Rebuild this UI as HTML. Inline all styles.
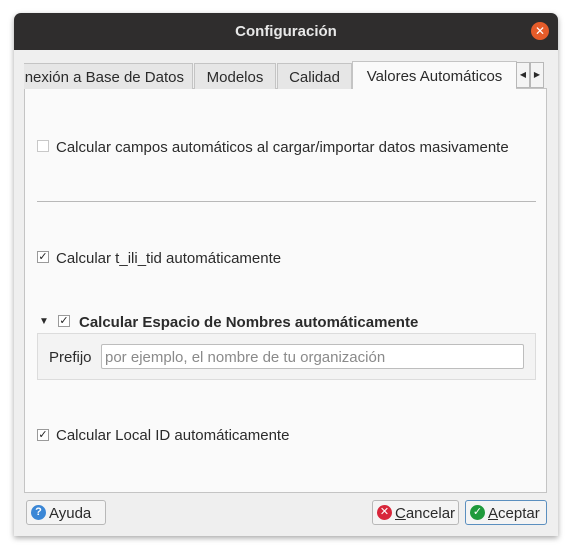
<!DOCTYPE html>
<html><head><style>
*{margin:0;padding:0;box-sizing:border-box}
body{width:577px;height:555px;background:#fff;font-family:"Liberation Sans","DejaVu Sans",sans-serif;font-size:15px;color:#2b2b2b;position:relative;overflow:hidden}
.a{position:absolute}
.win{left:14px;top:13px;width:544px;height:523px;background:#efefef;border-radius:7px 7px 0 0;box-shadow:0 2px 6px rgba(0,0,0,.35);overflow:hidden}
.close{left:531px;top:22px;width:18px;height:18px;border-radius:50%;background:#e55c2a;color:#fff;font-size:12px;line-height:18px;text-align:center}
.tab{top:63px;height:26px;background:#e6e6e6;border:1px solid #c4c4c4;border-bottom:none;line-height:27px;text-align:center;color:#2b2b2b;white-space:nowrap;overflow:hidden}
.panel{left:24px;top:88px;width:523px;height:405px;background:#fafafa;border:1px solid #c4c4c4}
.cb{width:12px;height:12px;border:1px solid #9a9a9a;background:#fff;font-size:11px;line-height:10px;text-align:center;color:#222}
.btn{top:500px;height:25px;border:1px solid #b8b8b8;border-radius:3px;background:#f4f4f4;line-height:25px;padding-left:22px;font-size:15px}
.ic{position:absolute;left:4px;top:4px;width:15px;height:15px;border-radius:50%;color:#fff;font-size:11px;line-height:15px;text-align:center;font-weight:bold}
</style></head><body>
<div class="a win"></div>
<div class="a" style="left:14px;top:13px;width:544px;height:37px;background:#2f2d2d;border-radius:7px 7px 0 0;color:#e8e8e8;font-weight:bold;text-align:center;line-height:38px">Configuración</div>
<div class="a close">✕</div>
<div class="a panel"></div>
<div class="a tab" style="left:24px;width:169px;text-align:right;padding-right:8px;border-left:none">nexión a Base de Datos</div>
<div class="a tab" style="left:194px;width:82px">Modelos</div>
<div class="a tab" style="left:277px;width:75px">Calidad</div>
<div class="a tab" style="left:352px;width:165px;top:61px;height:28px;background:#fafafa;line-height:29px">Valores Automáticos</div>
<div class="a" style="left:516px;top:62px;width:14px;height:26px;border:1px solid #b8b8b8;background:#f4f4f4;font-size:8px;line-height:24px;text-align:center">◀</div>
<div class="a" style="left:530px;top:62px;width:14px;height:26px;border:1px solid #b8b8b8;background:#f4f4f4;font-size:8px;line-height:24px;text-align:center">▶</div>

<div class="a cb" style="left:37px;top:140px;border-color:#c8c8c8"></div>
<div class="a" style="left:56px;top:139px">Calcular campos automáticos al cargar/importar datos masivamente</div>
<div class="a" style="left:37px;top:201px;width:499px;height:1px;background:#b8b8b8"></div>

<div class="a cb" style="left:37px;top:251px">✓</div>
<div class="a" style="left:56px;top:250px">Calcular t_ili_tid automáticamente</div>

<div class="a" style="left:39px;top:316px;font-size:10px">▼</div>
<div class="a cb" style="left:58px;top:315px">✓</div>
<div class="a" style="left:79px;top:314px;font-weight:bold">Calcular Espacio de Nombres automáticamente</div>
<div class="a" style="left:37px;top:333px;width:499px;height:47px;border:1px solid #dcdcdc;background:#f3f3f3"></div>
<div class="a" style="left:49px;top:349px">Prefijo</div>
<div class="a" style="left:101px;top:344px;width:423px;height:25px;border:1px solid #bdbdbd;border-radius:2px;background:#fff;color:#8a8a8a;padding-left:3px;line-height:25px">por ejemplo, el nombre de tu organización</div>

<div class="a cb" style="left:37px;top:429px">✓</div>
<div class="a" style="left:56px;top:427px">Calcular Local ID automáticamente</div>

<div class="a btn" style="left:26px;width:80px"><span class="ic" style="background:#3b87d6">?</span>Ayuda</div>
<div class="a btn" style="left:372px;width:87px"><span class="ic" style="background:#d8263a">✕</span><u>C</u>ancelar</div>
<div class="a btn" style="left:465px;width:82px;border-color:#5b8fbf"><span class="ic" style="background:#1f9a3c">✓</span><u>A</u>ceptar</div>
</body></html>
